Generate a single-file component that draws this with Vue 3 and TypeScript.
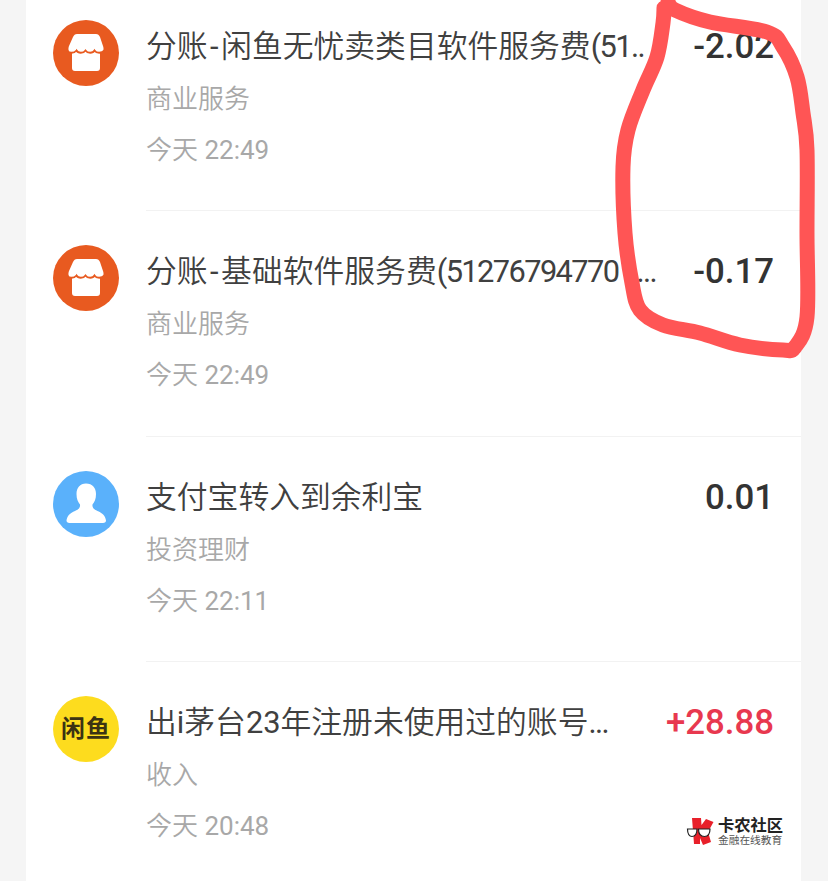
<script setup lang="ts">
type Kind = 'store' | 'person' | 'fish'
interface Row { kind: Kind; lead?: string; title: string; tail?: string; category: string; time: string; amount: string; income?: boolean }
const rows: Row[] = [
  { kind: 'store', lead: '分账', title: '闲鱼无忧卖类目软件服务费', tail: '(51..', category: '商业服务', time: '今天 22:49', amount: '-2.02' },
  { kind: 'store', lead: '分账', title: '基础软件服务费', tail: '(51276794770\u00a0\u00a0\u00a0...', category: '商业服务', time: '今天 22:49', amount: '-0.17' },
  { kind: 'person', title: '支付宝转入到余利宝', category: '投资理财', time: '今天 22:11', amount: '0.01' },
  { kind: 'fish', title: '出i茅台23年注册未使用过的账号', tail: '...', category: '收入', time: '今天 20:48', amount: '+28.88', income: true },
]

const points: [number, number][] = [
  [668, 2], [675, 10], [710, 22], [767, 32], [783, 47], [797, 77], [803, 113], [807, 150],
  [807, 233], [807, 317], [795, 347], [783, 350], [740, 345], [700, 333], [663, 325],
  [640, 310], [632, 283], [625, 233], [623, 167], [628, 130], [643, 90], [657, 57], [663, 23], [664, 8],
]

function smoothPath(p: [number, number][]): string {
  let d = `M${p[0][0]} ${p[0][1]}`
  for (let i = 0; i < p.length - 1; i++) {
    const a = p[Math.max(i - 1, 0)]
    const b = p[i]
    const c = p[i + 1]
    const e = p[Math.min(i + 2, p.length - 1)]
    const c1x = b[0] + (c[0] - a[0]) / 6
    const c1y = b[1] + (c[1] - a[1]) / 6
    const c2x = c[0] - (e[0] - b[0]) / 6
    const c2y = c[1] - (e[1] - b[1]) / 6
    d += `C${c1x} ${c1y} ${c2x} ${c2y} ${c[0]} ${c[1]}`
  }
  return d
}
const scribble = smoothPath(points)
</script>

<template>
  <div class="page">
    <ul class="list">
      <li v-for="(row, i) in rows" :key="i" class="row">
        <div class="icon" :class="row.kind">
          <svg v-if="row.kind === 'store'" viewBox="0 0 66 66" width="66" height="66">
            <path fill="#fff" d="M24 14H43c2 0 3 1 4 3l3 9c1 3 1 6-3 7v15c0 2-1 3-3 3H22c-2 0-3-1-3-3V33c-4-1-4-4-3-7l4-9c1-2 2-3 4-3z" />
            <path fill="none" stroke="#e85a20" stroke-width="1.800" d="M14 30.500c2 3 7 3 9.500 0c1.500 3 7 3 9 0c2 3 7.500 3 9 0c2 3 7 3 10 0" />
          </svg>
          <svg v-else-if="row.kind === 'person'" viewBox="0 0 66 66" width="66" height="66">
            <path fill="#fff" d="M33 12.500c-6 0-9.500 4.500-9.500 10.500c0 5 1.500 8 3.500 10.500c.5 3-1.500 5-5 6.500c-5 2-8 5-8.500 9.500c0 1.500 1 2.500 3 2.500H50c2 0 3-1 3-2.500c-.5-4.500-3.500-7.500-8.500-9.500c-3.500-1.500-5.500-3.500-5-6.500c2-2.500 3.500-5.500 3.500-10.500c0-6-3.500-10.500-10-10.500z" />
          </svg>
          <span v-else class="fish-mark">闲鱼</span>
        </div>
        <div class="body">
          <div class="info">
            <div class="title"><template v-if="row.lead">{{ row.lead }}<span class="dash">-</span></template>{{ row.title }}<span v-if="row.tail" class="tail">{{ row.tail }}</span></div>
            <div class="category">{{ row.category }}</div>
            <div class="time">{{ row.time }}</div>
          </div>
          <div class="amount" :class="{ income: row.income }">{{ row.amount }}</div>
        </div>
      </li>
    </ul>

    <svg class="scribble" viewBox="0 0 828 881" width="828" height="881">
      <path fill="none" stroke="#ff5555" stroke-width="15" stroke-linecap="round" stroke-linejoin="round" :d="scribble" />
    </svg>

    <div class="watermark">
      <svg viewBox="0 0 28 30" width="28" height="30">
        <path fill="#e8202a" d="M6 2L15 2L15.500 9L20 3L27.500 6L22 16L25 26L17 29L14 22L14 28L8 28Z" />
        <path fill="#fff" stroke="#222" stroke-width="1.200" d="M1.500 13H11C11 18 9 20.500 6 20.500C3.500 20.500 1.500 18 1.500 13z" />
        <path fill="#fff" stroke="#222" stroke-width="1.200" d="M12.500 13H24C24 18 22 20.500 18.500 20.500C15 20.500 12.500 18 12.500 13z" />
      </svg>
      <div class="wm-text">
        <div class="wm-name">卡农社区</div>
        <div class="wm-sub">金融在线教育</div>
      </div>
    </div>
  </div>
</template>

<style scoped>
.page {
  position: relative;
  width: 828px;
  height: 881px;
  overflow: hidden;
  background: #f5f5f5;
  font-family: Roboto, "Noto Sans CJK SC", sans-serif;
}
.list {
  list-style: none;
  margin: -14px 27px 0 26px;
  padding: 0;
  background: #fff;
}
.row {
  display: flex;
  height: 225.330px;
  padding-left: 27px;
}
.icon {
  flex: none;
  width: 66px;
  height: 66px;
  margin-top: 34px;
  border-radius: 50%;
  display: flex;
  align-items: center;
  justify-content: center;
}
.store { background: #e85a20; }
.person { background: #5ab1fb; }
.fish { background: #fddc1e; }
.fish-mark {
  font-size: 24px;
  font-weight: 700;
  color: #3b3313;
  line-height: 1;
  letter-spacing: 1px;
}
.body {
  flex: 1;
  min-width: 0;
  margin-left: 27px;
  display: flex;
  justify-content: space-between;
  padding-right: 27px;
  border-bottom: 1px solid #f2f2f2;
}
.row:last-child .body { border-bottom: 0; }
.info { min-width: 0; padding-top: 38px; }
.title {
  font-family: Roboto, "Noto Sans CJK SC DemiLight", "Noto Sans CJK SC", sans-serif;
  font-size: 30.800px;
  line-height: 46px;
  color: #404040;
  white-space: nowrap;
}
.dash { margin: 0 2.500px; }
.tail { letter-spacing: -1.600px; }
.category {
  font-family: Roboto, "Noto Sans CJK SC DemiLight", "Noto Sans CJK SC", sans-serif;
  margin-top: 10px;
  font-size: 26px;
  line-height: 38px;
  color: #a8a8a8;
}
.time {
  font-family: Roboto, "Noto Sans CJK SC DemiLight", "Noto Sans CJK SC", sans-serif;
  margin-top: 13px;
  font-size: 26px;
  line-height: 38px;
  color: #a8a8a8;
}
.amount {
  padding-top: 37px;
  font-size: 34.800px;
  line-height: 46px;
  font-weight: 500;
  color: #333;
  white-space: nowrap;
}
.income { color: #e8384f; }
.scribble {
  position: absolute;
  left: 0;
  top: 0;
  pointer-events: none;
}
.watermark {
  position: absolute;
  left: 686px;
  top: 815px;
  display: flex;
  align-items: center;
  gap: 4px;
}
.wm-text { display: flex; flex-direction: column; padding-top: 2px; }
.wm-name {
  font-size: 16.300px;
  line-height: 18px;
  font-weight: 700;
  color: #222;
  white-space: nowrap;
}
.wm-sub {
  font-size: 10.700px;
  line-height: 12px;
  color: #555;
  white-space: nowrap;
}
</style>
